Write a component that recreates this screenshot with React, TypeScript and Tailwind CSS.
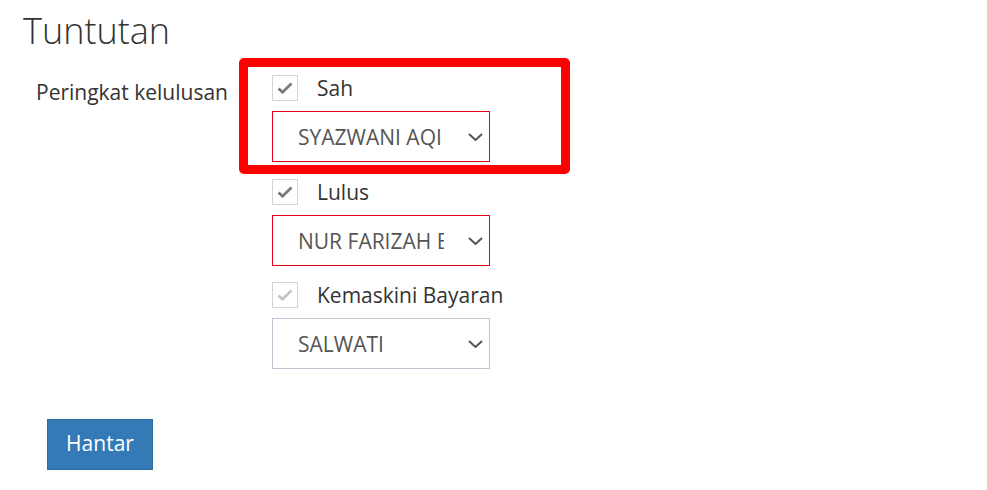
import React from 'react';

interface ApprovalStepProps {
  label: string;
  value: string;
  invalid?: boolean;
  disabledCheck?: boolean;
}

const CheckIcon = ({ color }: { color: string }) => (
  <svg width="16" height="12" viewBox="0 0 16 12" fill="none">
    <path d="M1.5 6.5 L5.5 10.2 L14.5 1.5" stroke={color} strokeWidth="2.8" />
  </svg>
);

const ChevronIcon = () => (
  <svg width="15" height="8" viewBox="0 0 15 8" fill="none">
    <path d="M1 1 L7.5 7 L14 1" stroke="#555" strokeWidth="2" />
  </svg>
);

const ApprovalStep: React.FC<ApprovalStepProps> = ({ label, value, invalid, disabledCheck }) => {
  return (
    <div className="flex flex-col">
      <div className="flex items-center h-[26px]">
        <div className="w-[26px] h-[26px] border border-[#d4d4d4] bg-white flex items-center justify-center">
          <CheckIcon color={disabledCheck ? '#c4c4c4' : '#7a7a7a'} />
        </div>
        <span className="ml-[19px] text-[21px] leading-[26px] text-[#333]">{label}</span>
      </div>
      <div
        className={`mt-[10px] w-[218px] h-[51px] bg-white flex items-center border ${
          invalid ? 'border-[#e2001a]' : 'border-[#bcc6d3]'
        }`}
      >
        <span className="ml-[25px] w-[146px] overflow-hidden whitespace-nowrap text-[21px] leading-[26px] text-[#555]">
          {value}
        </span>
        <span className="ml-auto mr-[6px] flex">
          <ChevronIcon />
        </span>
      </div>
    </div>
  );
};

export default function App() {
  return (
    <div
      className="relative w-full h-[490px] bg-white text-[#333]"
      style={{ fontFamily: '"Open Sans", "Liberation Sans", sans-serif' }}
    >
      <h2 className="ml-[23px] pt-[13px] text-[36px] leading-[36px] font-light text-[#333]">Tuntutan</h2>

      <div className="flex mt-[26px]">
        <div className="ml-[36px] w-[236px] mt-[4px]">
          <span className="text-[21px] leading-[26px]">Peringkat kelulusan</span>
        </div>
        <div className="flex flex-col">
          <ApprovalStep label="Sah" value="SYAZWANI AQI" invalid />
          <div className="mt-[17px]">
            <ApprovalStep label="Lulus" value="NUR FARIZAH BINTI" invalid />
          </div>
          <div className="mt-[16px]">
            <ApprovalStep label="Kemaskini Bayaran" value="SALWATI" disabledCheck />
          </div>
        </div>
      </div>

      <button className="ml-[47px] mt-[50px] w-[106px] h-[51px] pb-[3px] bg-[#337ab7] border border-[#2e6da4] text-white text-[21px] leading-[26px]">
        Hantar
      </button>

      {/* red annotation frame */}
      <div className="absolute left-[239px] top-[58px] w-[331px] h-[116px] border-[9px] border-[#ff0000] rounded-[5px] pointer-events-none" />
    </div>
  );
}
